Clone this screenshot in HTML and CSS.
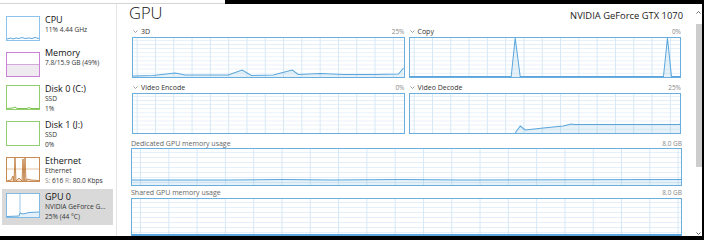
FILE: index.html
```html
<!DOCTYPE html>
<html lang="en">
<head>
    <meta charset="UTF-8">
    <title>Task Manager - GPU</title>
    <link rel="stylesheet" href="styles.css">
</head>
<body>
    <div class="chrome"><div class="chrome-tab"></div></div>
    <div class="window">
        <div class="sidebar">
            <div class="item">
                <div class="thumb cpu">
                    <svg viewBox="0 0 32 23" preserveAspectRatio="none"><polyline points="0,22 4,21 6,22 9,21 12,21.5 15,20.5 18,21.5 22,21 25,21.5 28,20.5 32,21.5" fill="none" stroke="#5ea7dc" stroke-width="1"/></svg>
                </div>
                <div class="info">
                    <div class="name">CPU</div>
                    <div class="sub">11% 4.44 GHz</div>
                </div>
            </div>
            <div class="item">
                <div class="thumb memory">
                    <svg viewBox="0 0 32 23" preserveAspectRatio="none"><rect x="0" y="11.5" width="32" height="11.5" fill="#efeaf0"/><line x1="0" y1="11.5" x2="32" y2="11.5" stroke="#d3a6dc" stroke-width="1"/></svg>
                </div>
                <div class="info">
                    <div class="name">Memory</div>
                    <div class="sub">7.8/15.9 GB (49%)</div>
                </div>
            </div>
            <div class="item">
                <div class="thumb disk">
                    <svg viewBox="0 0 32 23" preserveAspectRatio="none"><polyline points="0,22.5 6,22 8,21 10,22.5 20,22.5 22,21.5 24,22.5 32,22.5" fill="none" stroke="#7cc250" stroke-width="1"/></svg>
                </div>
                <div class="info">
                    <div class="name">Disk 0 (C:)</div>
                    <div class="sub">SSD</div>
                    <div class="sub">1%</div>
                </div>
            </div>
            <div class="item">
                <div class="thumb disk"></div>
                <div class="info">
                    <div class="name">Disk 1 (J:)</div>
                    <div class="sub">SSD</div>
                    <div class="sub">0%</div>
                </div>
            </div>
            <div class="item">
                <div class="thumb ethernet">
                    <svg viewBox="0 0 32 23" preserveAspectRatio="none">
                        <line x1="0" y1="11" x2="32" y2="11" stroke="#e7c3a2" stroke-width="1"/>
                        <polygon points="0,23 4,22 6,18 7,23 8,0 9,23 12,20 15,23 16,1 17,23 18,0 19,23 20,21 24,22 32,22.5 32,23" fill="#f1dcc9"/>
                        <polyline points="0,23 4,22 6,18 7,23 8,0 9,23 12,20 15,23 16,1 17,23 18,0 19,23 20,21 24,22 32,22.5" fill="none" stroke="#b8712f" stroke-width="0.8"/>
                    </svg>
                </div>
                <div class="info">
                    <div class="name">Ethernet</div>
                    <div class="sub">Ethernet</div>
                    <div class="sub"><span class="dim">S:</span> 616 <span class="dim">R:</span> 80.0 Kbps</div>
                </div>
            </div>
            <div class="item selected">
                <div class="thumb gpu">
                    <svg viewBox="0 0 32 23" preserveAspectRatio="none">
                        <line x1="13" y1="0" x2="13" y2="23" stroke="#7fb9e4" stroke-width="0.8"/>
                        <polygon points="0,22.5 12,22 13,19 16,20 22,18.5 32,18 32,23 0,23" fill="#e4f0fa"/>
                        <polyline points="0,22.5 12,22 13,19 16,20 22,18.5 32,18" fill="none" stroke="#5ea7dc" stroke-width="1"/>
                    </svg>
                </div>
                <div class="info">
                    <div class="name">GPU 0</div>
                    <div class="sub">NVIDIA GeForce G...</div>
                    <div class="sub">25% (44 °C)</div>
                </div>
            </div>
        </div>

        <div class="perf">
            <div class="header">
                <h1>GPU</h1>
                <span class="model">NVIDIA GeForce GTX 1070</span>
            </div>

            <div class="engines">
                <div class="engine">
                    <div class="label">
                        <span><svg class="chev" viewBox="0 0 5 3"><polyline points="0.5,0.5 2.5,2.5 4.5,0.5" fill="none" stroke="#888" stroke-width="0.8"/></svg>3D</span>
                        <span class="value">25%</span>
                    </div>
                    <div class="graph">
                        <svg viewBox="0 0 270 39" preserveAspectRatio="none">
                            <polygon points="0,38 20,37.5 42,35 52,37 75,37 95,37 109,32 118,37.5 140,37 159,32 165,36.5 187,35.5 210,36.5 240,36.5 265,36 270,30 270,39 0,39" fill="rgba(17,125,187,0.1)"/>
                            <polyline points="0,38 20,37.5 42,35 52,37 75,37 95,37 109,32 118,37.5 140,37 159,32 165,36.5 187,35.5 210,36.5 240,36.5 265,36 270,30" fill="none" stroke="#5aa6dc" stroke-width="1"/>
                        </svg>
                    </div>
                </div>
                <div class="engine">
                    <div class="label">
                        <span><svg class="chev" viewBox="0 0 5 3"><polyline points="0.5,0.5 2.5,2.5 4.5,0.5" fill="none" stroke="#888" stroke-width="0.8"/></svg>Copy</span>
                        <span class="value">0%</span>
                    </div>
                    <div class="graph">
                        <svg viewBox="0 0 270 39" preserveAspectRatio="none">
                            <polygon points="101,39 105,0 110,39" fill="rgba(17,125,187,0.1)"/>
                            <polygon points="253,39 257,0 261,39" fill="rgba(17,125,187,0.1)"/>
                            <polyline points="0,38.5 101,38.5 105,0 110,38.5 253,38.5 257,0 261,38.5 270,38.5" fill="none" stroke="#5aa6dc" stroke-width="1"/>
                        </svg>
                    </div>
                </div>
                <div class="engine">
                    <div class="label">
                        <span><svg class="chev" viewBox="0 0 5 3"><polyline points="0.5,0.5 2.5,2.5 4.5,0.5" fill="none" stroke="#888" stroke-width="0.8"/></svg>Video Encode</span>
                        <span class="value">0%</span>
                    </div>
                    <div class="graph"></div>
                </div>
                <div class="engine">
                    <div class="label">
                        <span><svg class="chev" viewBox="0 0 5 3"><polyline points="0.5,0.5 2.5,2.5 4.5,0.5" fill="none" stroke="#888" stroke-width="0.8"/></svg>Video Decode</span>
                        <span class="value">25%</span>
                    </div>
                    <div class="graph">
                        <svg viewBox="0 0 270 39" preserveAspectRatio="none">
                            <polygon points="105,39 110,32 115,36 133,34 153,32 161,30 164,30.5 270,30.5 270,39" fill="rgba(17,125,187,0.1)"/>
                            <polyline points="105,39 110,32 115,36 133,34 153,32 161,30 164,30.5 269,30.5 270,29.5" fill="none" stroke="#5aa6dc" stroke-width="1"/>
                        </svg>
                    </div>
                </div>
            </div>

            <div class="memory">
                <div class="label mem-label">
                    <span>Dedicated GPU memory usage</span>
                    <span class="value">8.0 GB</span>
                </div>
                <div class="graph mem">
                    <svg viewBox="0 0 549 36" preserveAspectRatio="none">
                        <polygon points="0,31 100,31 150,30.5 200,31 270,30.5 330,31 549,30.5 549,36 0,36" fill="rgba(17,125,187,0.1)"/>
                        <polyline points="0,31 100,31 150,30.5 200,31 270,30.5 330,31 549,30.5" fill="none" stroke="#5aa6dc" stroke-width="1"/>
                    </svg>
                </div>
                <div class="label mem-label shared">
                    <span>Shared GPU memory usage</span>
                    <span class="value">8.0 GB</span>
                </div>
                <div class="graph mem shared-graph"></div>
            </div>
        </div>

        <div class="scrollbar">
            <svg class="arrow" viewBox="0 0 5 3"><polyline points="0.5,2.5 2.5,0.5 4.5,2.5" fill="none" stroke="#555" stroke-width="0.9"/></svg>
            <div class="track"><div class="bar"></div></div>
            <svg class="arrow" viewBox="0 0 5 3"><polyline points="0.5,0.5 2.5,2.5 4.5,0.5" fill="none" stroke="#555" stroke-width="0.9"/></svg>
        </div>
    </div>
</body>
</html>
```

FILE: styles.css
```css
body {
    margin: 0;
    width: 704px;
    height: 240px;
    overflow: hidden;
    background: #000;
    font-family: "Open Sans", "Segoe UI", sans-serif;
    color: #111;
}

.chrome {
    height: 4px;
    display: flex;
}
.chrome-tab {
    width: 225px;
    background: #fff;
    border-bottom: 1px solid #d4d4d4;
    box-sizing: border-box;
}

.window {
    width: 702px;
    height: 232px;
    background: #fff;
    display: flex;
}

/* left list */
.sidebar {
    width: 117px;
    flex-shrink: 0;
    box-sizing: border-box;
    border-right: 1px solid #e6e6e6;
    padding-top: 8px;
}

.item {
    display: flex;
    gap: 5px;
    margin-left: 2px;
    width: 111px;
    padding: 3px 0 3px 4px;
    box-sizing: border-box;
}
.item.selected { background: #d9d9d9; }

.thumb {
    width: 34px;
    height: 25px;
    margin: 1px 0;
    flex-shrink: 0;
    box-sizing: border-box;
    border: 1px solid;
    background: #fff;
}
.thumb svg { display: block; width: 100%; height: 100%; }
.thumb.cpu { border-color: #8cc3ea; }
.thumb.memory { border-color: #c982d6; }
.thumb.disk { border-color: #94cd70; }
.thumb.ethernet { border-color: #c98b52; }
.thumb.gpu { border-color: #7fb9e4; }

.info { white-space: nowrap; }
.name {
    font-size: 9px;
    line-height: 10px;
    color: #111;
}
.sub {
    font-size: 6.6px;
    line-height: 10px;
    color: #333;
}
.dim { color: #888; }

/* main panel */
.perf {
    flex: 1;
    padding: 0 8px 0 14px;
    min-width: 0;
}

.header {
    height: 22px;
    display: flex;
    justify-content: space-between;
    align-items: baseline;
}
.header h1 {
    margin: 0 0 0 -2px;
    font-size: 16.5px;
    line-height: 17px;
    font-weight: 300;
    color: #111;
}
.model {
    font-size: 9.4px;
    color: #222;
    margin-right: -1px;
}

.engines {
    display: grid;
    grid-template-columns: 1fr 1fr;
    column-gap: 4px;
    row-gap: 4px;
    padding: 0 1px;
}

.label {
    display: flex;
    justify-content: space-between;
    align-items: center;
    height: 11px;
    font-size: 7px;
    color: #333;
}
.label .value { color: #888; font-size: 6.5px; }
.chev {
    width: 5px;
    height: 3px;
    margin: 0 3px 0 1px;
    vertical-align: 1px;
}

.graph {
    height: 41px;
    box-sizing: border-box;
    border: 1px solid #6aaee0;
    background-color: #fff;
    background-image:
        linear-gradient(to right, #d6e8f6 1px, transparent 1px),
        linear-gradient(to bottom, #e4eff9 1px, transparent 1px);
    background-size: 18.3px 100%, 100% 4.1px;
    background-position: 3.7px 0, 0 2px;
}
.graph svg { display: block; width: 100%; height: 100%; }

.memory { margin-top: 4px; }
.mem-label {
    height: 10px;
    color: #666;
}
.mem-label.shared { height: 11px; margin-top: 1px; }
.graph.mem {
    height: 38px;
    background-size: 28.3px 100%, 100% 5px;
    background-position: 8px 0, 0 3px;
}
.graph.shared-graph {
    border-bottom: 2px solid #5aa6dc;
}

/* scrollbar */
.scrollbar {
    width: 12px;
    flex-shrink: 0;
    box-sizing: border-box;
    padding: 7px 0 0 6px;
    display: flex;
    flex-direction: column;
}
.arrow {
    width: 5px;
    height: 3px;
    display: block;
}
.track {
    height: 208px;
    padding-top: 10px;
}
.bar {
    width: 6px;
    height: 143px;
    background: #cdcdcd;
}
```
